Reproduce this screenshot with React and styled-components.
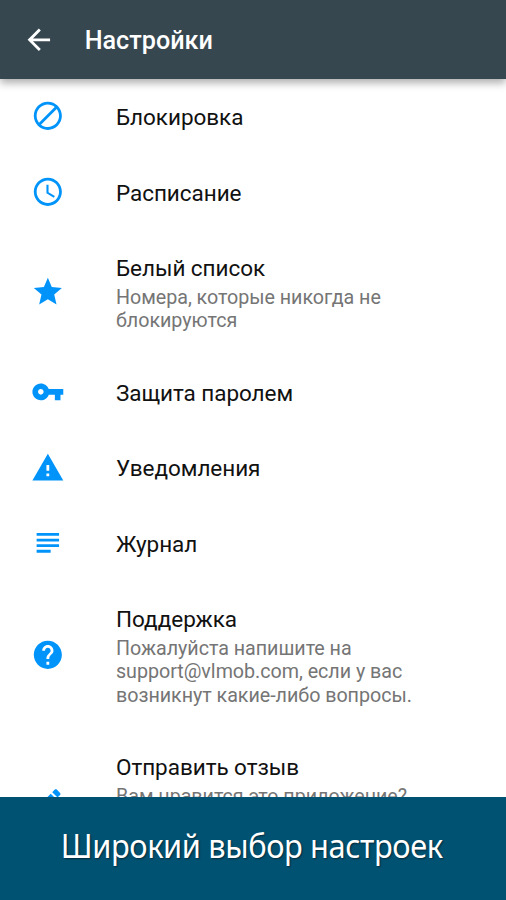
import React from "react";
import styled, { createGlobalStyle } from "styled-components";

const GlobalStyle = createGlobalStyle`
  * {
    box-sizing: border-box;
  }

  body {
    margin: 0;
    background-color: #fff;
    font-family: Roboto, "Noto Sans", sans-serif;
    overflow: hidden;
  }
`;

const Screen = styled.div`
  width: 506px;
  height: 900px;
  display: flex;
  flex-direction: column;
  overflow: hidden;
`;

const Toolbar = styled.header`
  flex: 0 0 79px;
  display: flex;
  align-items: center;
  padding: 0 22.4px;
  background-color: #37474f;
  box-shadow: 0 4px 8px rgba(0, 0, 0, 0.32);
  z-index: 1;
`;

const Title = styled.h1`
  margin: 3px 0 0 28.6px;
  color: #fff;
  font-size: 25.2px;
  font-weight: 500;
  line-height: 30px;
`;

const SettingsList = styled.ul`
  flex: 1;
  min-height: 0;
  margin: 0;
  padding: 0.4px 0 0;
  list-style: none;
  overflow: hidden;
`;

const SettingsItem = styled.li`
  display: flex;
  align-items: center;
  padding: 24.6px 22px 24.6px 31.4px;
`;

const IconBox = styled.div`
  flex: 0 0 84.6px;
  height: 0;
  display: flex;
  align-items: center;
  margin-bottom: 2px;
`;

const Icon = styled.svg`
  flex: none;
  width: 33.7px;
  height: 33.7px;
  fill: ${(props) => props.$color};
`;

const Name = styled.div`
  color: #111;
  font-size: 22.5px;
  line-height: 26.4px;
  letter-spacing: -0.05px;
`;

const Summary = styled.div`
  min-height: ${(props) => props.$lines * 23.1}px;
  margin: 4.5px 0 -1.8px;
  color: #757575;
  font-size: 19.7px;
  line-height: 23.1px;
  letter-spacing: -0.03px;
  white-space: pre-line;
`;

const Banner = styled.footer`
  flex: 0 0 103px;
  display: flex;
  align-items: center;
  justify-content: center;
  padding: 0 2px 5px 0;
  background-color: #005273;
`;

const BannerText = styled.div`
  color: #fff;
  font-family: "Noto Sans", sans-serif;
  font-size: 32.5px;
  letter-spacing: -0.4px;
  line-height: 44px;
  white-space: nowrap;
  text-shadow: 1px 1px 2px rgba(0, 0, 0, 0.5);
  transform: scaleX(0.947);
`;

const icons = {
  back: "M20 11H7.83l5.59-5.59L12 4l-8 8 8 8 1.41-1.41L7.83 13H20v-2z",
  block:
    "M12 2C6.48 2 2 6.48 2 12s4.48 10 10 10 10-4.48 10-10S17.52 2 12 2zM4 12c0-4.42 3.58-8 8-8 1.85 0 3.55.63 4.9 1.69L5.69 16.9C4.63 15.55 4 13.85 4 12zm8 8c-1.85 0-3.55-.63-4.9-1.69L18.31 7.1C19.37 8.45 20 10.15 20 12c0 4.42-3.58 8-8 8z",
  clock:
    "M11.99 2C6.47 2 2 6.48 2 12s4.47 10 9.99 10C17.52 22 22 17.52 22 12S17.52 2 11.99 2zM12 20c-4.42 0-8-3.58-8-8s3.58-8 8-8 8 3.58 8 8-3.58 8-8 8zm.5-13H11v6l5.25 3.15.75-1.23-4.5-2.67z",
  star: "M12 17.27L18.18 21l-1.64-7.03L22 9.24l-7.19-.61L12 2 9.19 8.63 2 9.24l5.46 4.73L5.82 21z",
  key: "M12.65 10C11.83 7.67 9.61 6 7 6c-3.31 0-6 2.69-6 6s2.69 6 6 6c2.61 0 4.83-1.67 5.65-4H17v4h4v-4h2v-4H12.65zM7 14c-1.1 0-2-.9-2-2s.9-2 2-2 2 .9 2 2-.9 2-2 2z",
  warning: "M1 21h22L12 2 1 21zm12-3h-2v-2h2v2zm0-4h-2v-4h2v4z",
  journal: "M14 17H4v2h10v-2zm6-8H4v2h16V9zM4 15h16v-2H4v2zM4 5v2h16V5H4z",
  help: "M12 2C6.48 2 2 6.48 2 12s4.48 10 10 10 10-4.48 10-10S17.52 2 12 2zm1 17h-2v-2h2v2zm2.07-7.75l-.9.92C13.45 12.9 13 13.5 13 15h-2v-.5c0-1.1.45-2.1 1.17-2.83l1.24-1.26c.37-.36.59-.86.59-1.41 0-1.1-.9-2-2-2s-2 .9-2 2H8c0-2.21 1.79-4 4-4s4 1.79 4 4c0 .88-.36 1.68-.93 2.25z",
  edit: "M3 17.25V21h3.75L17.81 9.94l-3.75-3.75L3 17.25zM20.71 7.04c.39-.39.39-1.02 0-1.41l-2.34-2.34c-.39-.39-1.02-.39-1.41 0l-1.83 1.83 3.75 3.75 1.83-1.83z",
};

const settings = [
  { icon: "block", name: "Блокировка" },
  { icon: "clock", name: "Расписание" },
  {
    icon: "star",
    name: "Белый список",
    summary: "Номера, которые никогда не\nблокируются",
    lines: 2,
  },
  { icon: "key", name: "Защита паролем" },
  { icon: "warning", name: "Уведомления" },
  { icon: "journal", name: "Журнал" },
  {
    icon: "help",
    name: "Поддержка",
    summary:
      "Пожалуйста напишите на\nsupport@vlmob.com, если у вас\nвозникнут какие-либо вопросы.",
    lines: 3,
  },
  {
    icon: "edit",
    name: "Отправить отзыв",
    summary: "Вам нравится это приложение?",
    lines: 3,
  },
];

function Glyph({ name, color = "#0094fb" }) {
  return (
    <Icon viewBox="0 0 24 24" $color={color}>
      <path d={icons[name]} />
    </Icon>
  );
}

export default function App() {
  return (
    <>
      <GlobalStyle />
      <Screen>
        <Toolbar>
          <Glyph name="back" color="#fff" />
          <Title>Настройки</Title>
        </Toolbar>
        <SettingsList>
          {settings.map((item) => (
            <SettingsItem key={item.icon}>
              <IconBox>
                <Glyph name={item.icon} />
              </IconBox>
              <div>
                <Name>{item.name}</Name>
                {item.summary && (
                  <Summary $lines={item.lines}>{item.summary}</Summary>
                )}
              </div>
            </SettingsItem>
          ))}
        </SettingsList>
        <Banner>
          <BannerText>Широкий выбор настроек</BannerText>
        </Banner>
      </Screen>
    </>
  );
}
